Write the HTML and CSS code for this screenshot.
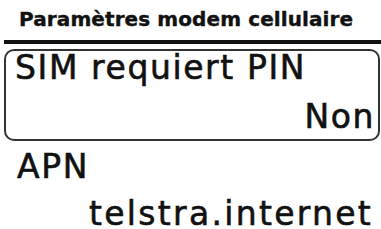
FILE: index.html
```html
<!DOCTYPE html>
<html>
<head>
    <meta charset="UTF-8">
    <title>Paramètres modem cellulaire</title>
    <link rel="stylesheet" href="styles.css">
</head>
<body>

<div class="screen">
    <h1 class="title">Paramètres modem cellulaire</h1>
    <div class="rule"></div>

    <!-- selected item -->
    <div class="item selected">
        <div class="label">SIM requiert PIN</div>
        <div class="value">Non</div>
    </div>

    <div class="item">
        <div class="label">APN</div>
        <div class="value indent">telstra.internet</div>
    </div>
</div>

</body>
</html>
```

FILE: styles.css
```css
body {
    margin: 0;
    background: #ffffff;
    color: #111111;
    font-family: "DejaVu Sans", Verdana, sans-serif;
}
.screen {
    width: 381px;
    display: flex;
    flex-direction: column;
}
.title {
    margin: 0;
    padding: 7px 0 0 19px;
    font-size: 20px;
    font-weight: bold;
    letter-spacing: 0.1px;
    line-height: 24px;
    -webkit-text-stroke: 0.4px #111111;
}
.rule {
    height: 4px;
    margin: 9px 0 0 4px;
    background: #111111;
}
.item {
    display: flex;
    flex-direction: column;
    font-size: 33px;
    letter-spacing: 1.6px;
    line-height: 30px;
    -webkit-text-stroke: 0.6px #111111;
}
.item .label {
    padding-left: 9px;
}
.item.selected {
    margin: 5px 1px 0 4px;
    padding: 1.6px 0 7px 0;
    border: 2px solid #333333;
    border-radius: 10px;
}
.item.selected .value {
    margin-top: 19px;
    text-align: right;
    padding-right: 3px;
}
.item + .item {
    margin-top: 11px;
}
.item + .item .label {
    padding-left: 17px;
}
.value.indent {
    margin-top: 17px;
    padding-left: 89px;
    letter-spacing: 2.3px;
}
```
